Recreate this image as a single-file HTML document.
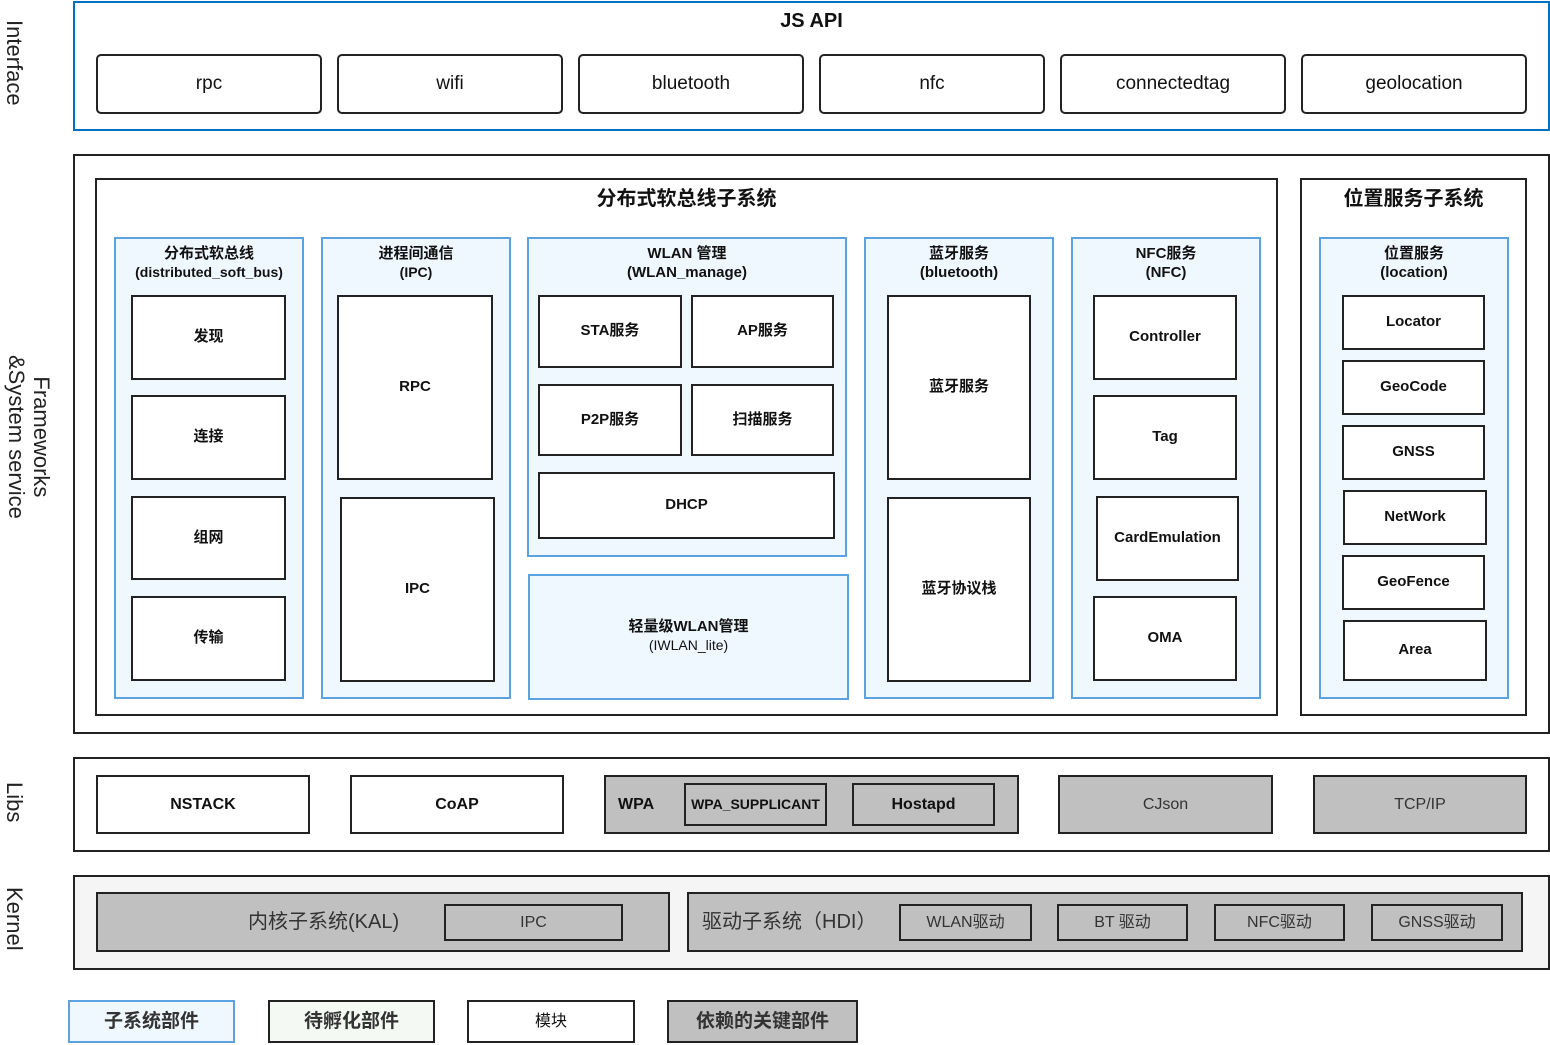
<!DOCTYPE html>
<html><head><meta charset="utf-8"><style>
body{margin:0;width:1550px;height:1045px;background:#fff;position:relative;overflow:hidden;font-family:"Liberation Sans","Noto Sans CJK SC",sans-serif;color:#111}
.b{position:absolute;box-sizing:border-box;display:flex;align-items:center;justify-content:center;text-align:center;border:2px solid #222;background:#fff;font-size:15px;font-weight:bold;line-height:1.25}
.o{background:transparent}
.p{background:#f0f8ff;border:2px solid #5ba3e0;align-items:flex-start;padding-top:6px}
.g{background:#c0c0c0;font-weight:normal;color:#333}
.btn{border-radius:5px;font-weight:normal;font-size:19px}
.t{position:absolute;font-weight:bold;text-align:center;line-height:1.2}
.v{position:absolute;transform:rotate(90deg);transform-origin:left top;white-space:nowrap;font-size:22px;text-align:center;line-height:1.15;color:#222}
.s{font-size:14px}
</style></head><body>

<div class="v" style="left:27px;top:20px">Interface</div>
<div class="v" style="left:54px;top:355px">Frameworks<br>&amp;System service</div>
<div class="v" style="left:27px;top:782px">Libs</div>
<div class="v" style="left:27px;top:887px">Kernel</div>

<!-- Interface -->
<div class="b o" style="left:73px;top:1px;width:1477px;height:130px;border-color:#0070c0"></div>
<div class="t" style="left:73px;top:9px;width:1477px;font-size:20px">JS API</div>
<div class="b btn" style="left:96px;top:54px;width:226px;height:60px">rpc</div>
<div class="b btn" style="left:337px;top:54px;width:226px;height:60px">wifi</div>
<div class="b btn" style="left:578px;top:54px;width:226px;height:60px">bluetooth</div>
<div class="b btn" style="left:819px;top:54px;width:226px;height:60px">nfc</div>
<div class="b btn" style="left:1060px;top:54px;width:226px;height:60px">connectedtag</div>
<div class="b btn" style="left:1301px;top:54px;width:226px;height:60px">geolocation</div>

<!-- Frameworks -->
<div class="b o" style="left:73px;top:154px;width:1477px;height:580px"></div>
<div class="b o" style="left:95px;top:178px;width:1183px;height:538px"></div>
<div class="t" style="left:95px;top:187px;width:1183px;font-size:20px">分布式软总线子系统</div>
<div class="b o" style="left:1300px;top:178px;width:227px;height:538px"></div>
<div class="t" style="left:1300px;top:187px;width:227px;font-size:20px">位置服务子系统</div>

<div class="b p" style="left:114px;top:237px;width:190px;height:462px"><div>分布式软总线<br><span class="s">(distributed_soft_bus)</span></div></div>
<div class="b" style="left:131px;top:295px;width:155px;height:85px">发现</div>
<div class="b" style="left:131px;top:395px;width:155px;height:85px">连接</div>
<div class="b" style="left:131px;top:496px;width:155px;height:84px">组网</div>
<div class="b" style="left:131px;top:596px;width:155px;height:85px">传输</div>

<div class="b p" style="left:321px;top:237px;width:190px;height:462px"><div>进程间通信<br><span class="s">(IPC)</span></div></div>
<div class="b" style="left:337px;top:295px;width:156px;height:185px">RPC</div>
<div class="b" style="left:340px;top:497px;width:155px;height:185px">IPC</div>

<div class="b p" style="left:527px;top:237px;width:320px;height:320px"><div>WLAN 管理<br>(WLAN_manage)</div></div>
<div class="b" style="left:538px;top:295px;width:144px;height:73px">STA服务</div>
<div class="b" style="left:691px;top:295px;width:143px;height:73px">AP服务</div>
<div class="b" style="left:538px;top:384px;width:144px;height:72px">P2P服务</div>
<div class="b" style="left:691px;top:384px;width:143px;height:72px">扫描服务</div>
<div class="b" style="left:538px;top:472px;width:297px;height:67px">DHCP</div>
<div class="b p" style="left:528px;top:574px;width:321px;height:126px;align-items:center;padding-top:0"><div>轻量级WLAN管理<br><span class="s" style="font-weight:normal">(IWLAN_lite)</span></div></div>

<div class="b p" style="left:864px;top:237px;width:190px;height:462px"><div>蓝牙服务<br>(bluetooth)</div></div>
<div class="b" style="left:887px;top:295px;width:144px;height:185px">蓝牙服务</div>
<div class="b" style="left:887px;top:497px;width:144px;height:185px">蓝牙协议栈</div>

<div class="b p" style="left:1071px;top:237px;width:190px;height:462px"><div>NFC服务<br>(NFC)</div></div>
<div class="b" style="left:1093px;top:295px;width:144px;height:85px">Controller</div>
<div class="b" style="left:1093px;top:395px;width:144px;height:85px">Tag</div>
<div class="b" style="left:1096px;top:496px;width:143px;height:85px">CardEmulation</div>
<div class="b" style="left:1093px;top:596px;width:144px;height:85px">OMA</div>

<div class="b p" style="left:1319px;top:237px;width:190px;height:462px"><div>位置服务<br>(location)</div></div>
<div class="b" style="left:1342px;top:295px;width:143px;height:55px">Locator</div>
<div class="b" style="left:1342px;top:360px;width:143px;height:55px">GeoCode</div>
<div class="b" style="left:1342px;top:425px;width:143px;height:55px">GNSS</div>
<div class="b" style="left:1343px;top:490px;width:144px;height:55px">NetWork</div>
<div class="b" style="left:1342px;top:555px;width:143px;height:55px">GeoFence</div>
<div class="b" style="left:1343px;top:620px;width:144px;height:61px">Area</div>

<!-- Libs -->
<div class="b o" style="left:73px;top:757px;width:1477px;height:95px"></div>
<div class="b" style="left:96px;top:775px;width:214px;height:59px;font-size:16px">NSTACK</div>
<div class="b" style="left:350px;top:775px;width:214px;height:59px;font-size:16px">CoAP</div>
<div class="b g" style="left:604px;top:775px;width:415px;height:59px;justify-content:flex-start;padding-left:12px;font-weight:bold;color:#111;font-size:16px">WPA</div>
<div class="b g" style="left:684px;top:783px;width:143px;height:43px;font-weight:bold;color:#111;font-size:14px">WPA_SUPPLICANT</div>
<div class="b g" style="left:852px;top:783px;width:143px;height:43px;font-weight:bold;color:#111;font-size:16px">Hostapd</div>
<div class="b g" style="left:1058px;top:775px;width:215px;height:59px;font-size:16px">CJson</div>
<div class="b g" style="left:1313px;top:775px;width:214px;height:59px;font-size:16px">TCP/IP</div>

<!-- Kernel -->
<div class="b" style="left:73px;top:875px;width:1477px;height:95px;background:#f5f5f5"></div>
<div class="b g" style="left:96px;top:892px;width:574px;height:60px;justify-content:flex-start;padding-left:150px;font-size:20px">内核子系统(KAL)</div>
<div class="b g" style="left:444px;top:904px;width:179px;height:37px;font-size:16px">IPC</div>
<div class="b g" style="left:687px;top:892px;width:836px;height:60px;justify-content:flex-start;padding-left:13px;font-size:20px">驱动子系统（HDI）</div>
<div class="b g" style="left:899px;top:904px;width:133px;height:37px;font-size:16px">WLAN驱动</div>
<div class="b g" style="left:1057px;top:904px;width:131px;height:37px;font-size:16px">BT 驱动</div>
<div class="b g" style="left:1214px;top:904px;width:131px;height:37px;font-size:16px">NFC驱动</div>
<div class="b g" style="left:1371px;top:904px;width:132px;height:37px;font-size:16px">GNSS驱动</div>

<!-- Legend -->
<div class="b" style="left:68px;top:1000px;width:167px;height:43px;background:#f0f8ff;border-color:#5ba3e0;font-size:19px;color:#333">子系统部件</div>
<div class="b" style="left:268px;top:1000px;width:167px;height:43px;background:#f4f9f4;font-size:19px;color:#333">待孵化部件</div>
<div class="b" style="left:467px;top:1000px;width:168px;height:43px;font-weight:normal;font-size:16px">模块</div>
<div class="b" style="left:667px;top:1000px;width:191px;height:43px;background:#c0c0c0;font-size:19px;color:#333">依赖的关键部件</div>

</body></html>
